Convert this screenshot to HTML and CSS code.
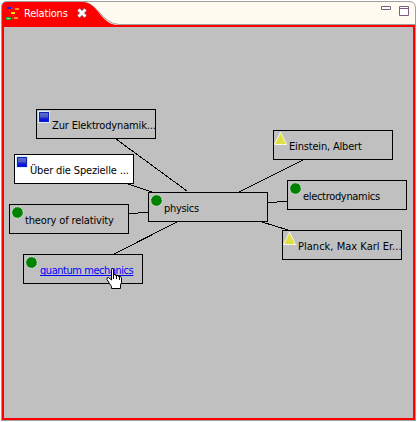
FILE: index.html
```html
<!DOCTYPE html>
<html lang="en">
<head>
<meta charset="utf-8">
<title>Relations</title>
<link rel="stylesheet" href="styles.css">
</head>
<body>
<section class="view">
  <header class="tabbar">
    <svg class="tab-shape" width="417" height="27" viewBox="0 0 417 27">
      <path d="M1.500 27V7Q1.500 1.500 7 1.500H409Q415.500 1.500 415.500 8V27Z" fill="#fffbf0" stroke="#a0a0a0"/>
      <path d="M2 27V7Q2 2 7 2H82C98 2 102 24 119 24.500H415" fill="none" stroke="#a0a0a0"/>
      <path d="M2 27V7Q2 2 7 2H82C98 2 101 25 118 25H415V27Z" fill="#f00"/>
    </svg>
    <svg class="tab-icon" width="14" height="14" viewBox="0 0 14 14" shape-rendering="crispEdges">
      <path fill="#c06050" d="M6 2h1v1H6zM3 4h1v1H3zM7 9h1v1H7zM6 12h1v1H6z"/>
      <path fill="#2020e0" d="M1 1h4v2H1z"/><path fill="#ff8c20" d="M9 2h4v2H9zM8 11h4v2H8z"/>
      <path fill="#ffe820" d="M5 6h4v2H5z"/><path fill="#20a030" d="M0 11h5v3H0z"/><path fill="#b0e080" d="M1 12h3v1H1z"/>
    </svg>
    <h1 class="tab-title">Relations</h1>
    <svg class="tab-close" width="10" height="10" viewBox="0 0 10 10">
      <path d="M1.500 1.500L8.500 8.500M8.500 1.500L1.500 8.500" stroke="#916080" stroke-width="4"/>
      <path d="M1.500 1.500L8.500 8.500M8.500 1.500L1.500 8.500" stroke="#fff" stroke-width="2.500"/>
    </svg>
    <svg class="window-tools" width="28" height="10" viewBox="0 0 28 10">
      <path d="M.5.5h9v3h-9zM18.500.5h9v9h-9zM18.500 2.500h9" fill="#fff" stroke="#7c5c80"/>
    </svg>
  </header>
  <main class="canvas"></main>

  <svg class="edges" width="417" height="422" viewBox="0 0 417 422">
    <path d="M116 139L187 191M128 184L152 192M129 214L148 212M114 254L177 222M239 192L303 160M268 203L287 201M262 222L288 230"/>
  </svg>

  <svg class="symbols" width="0" height="0">
    <linearGradient id="blue" x2="0" y2="1"><stop stop-color="#6472c8"/><stop offset=".5" stop-color="#4a5ac0"/><stop offset=".6" stop-color="#1828d0"/><stop offset="1" stop-color="#0000f0"/></linearGradient>
    <symbol id="square" viewBox="0 0 16 16"><path fill="#d8ecff" d="M2 2h12v12H2z"/><path fill="url(#blue)" d="M3 3h10v10H3z"/><path fill="none" stroke="#1020c0" d="M3.500 3.500h9v9h-9z"/></symbol>
    <symbol id="circle" viewBox="0 0 16 16"><circle cx="8.500" cy="8.500" r="5.700" fill="#008200" stroke="#dce8dc" stroke-dasharray="2 .7"/></symbol>
    <symbol id="triangle" viewBox="0 0 16 16"><path d="M7.500 2L13.500 14.500H1.500Z" fill="#e0e040" stroke="#fff" stroke-dasharray="2 .4"/></symbol>
  </svg>

  <div class="node zur"><svg class="icon"><use href="#square"/></svg><span class="label">Zur Elektrodynamik...</span></div>
  <div class="node spezielle"><svg class="icon"><use href="#square"/></svg><span class="label">Über die Spezielle ...</span></div>
  <div class="node theory"><svg class="icon"><use href="#circle"/></svg><span class="label">theory of relativity</span></div>
  <div class="node quantum"><svg class="icon"><use href="#circle"/></svg><a class="label">quantum mechanics</a></div>
  <div class="node physics"><svg class="icon"><use href="#circle"/></svg><span class="label">physics</span></div>
  <div class="node einstein"><svg class="icon"><use href="#triangle"/></svg><span class="label">Einstein, Albert</span></div>
  <div class="node electro"><svg class="icon"><use href="#circle"/></svg><span class="label">electrodynamics</span></div>
  <div class="node planck"><svg class="icon"><use href="#triangle"/></svg><span class="label">Planck, Max Karl Er...</span></div>

  <svg class="pointer" width="17" height="22" viewBox="0 0 17 22">
    <path d="M5.500 1.500Q6.500 0 7.500 1.500V6.500H9.500V7.500H12.500V8.500H14.500L15.500 10V14.500L14.500 17V20.500H5.500V18.500L3.500 15.500L1 11.500Q.5 9.500 2.500 9.500L5.500 12Z" fill="#fff" stroke="#000"/>
    <path d="M7.500 6v5M10.500 7v4M13.500 8v4" stroke="#000"/>
  </svg>
</section>
</body>
</html>
```
FILE: styles.css
```css
body {
  margin: 0;
  background: #fff;
  overflow: hidden;
  font: 11px/14px "DejaVu Sans Condensed", "DejaVu Sans", sans-serif;
  color: #000;
}
.view {
  position: relative;
  display: flex;
  flex-direction: column;
  width: 417px;
  height: 422px;
}
.tabbar {
  position: relative;
  display: flex;
  align-items: flex-start;
  height: 27px;
  flex: none;
  padding: 6px 8px 0 6px;
  box-sizing: border-box;
}
.tab-shape { position: absolute; left: 0; top: 0; }
.tab-icon, .tab-title, .tab-close, .window-tools { position: relative; flex: none; }
.tab-title {
  margin: 1px 0 0 4px;
  width: 44px;
  font: inherit;
  color: #fff;
  white-space: nowrap;
  letter-spacing: -.2px;
}
.tab-close { margin: 2px 0 0 9px; }
.window-tools { margin-left: auto; }
.canvas {
  height: 391px;
  margin: 0 2px;
  background: #c0c0c0;
  border: solid #f00;
  border-width: 0 2px 2px;
  box-shadow: 0 0 0 1px #a0a0a0;
  clip-path: inset(0 -1px -1px);
}
.edges { position: absolute; left: 0; top: 0; }
.edges path { stroke: #000; fill: none; shape-rendering: crispEdges; }
.symbols { position: absolute; }
.node {
  position: absolute;
  display: flex;
  width: 120px;
  height: 30px;
  box-sizing: border-box;
  border: 1px solid #000;
  background: #c0c0c0;
  letter-spacing: -.15px;
}
.icon { width: 16px; height: 16px; margin: -1px 0 0 -1px; flex: none; }
.label { margin-top: 9px; height: 14px; white-space: pre; }
.zur { left: 36px; top: 109px; }
.spezielle { left: 14px; top: 154px; background: #fff; }
.theory { left: 9px; top: 204px; }
.quantum { left: 23px; top: 254px; letter-spacing: -.45px; }
.quantum .label { margin-left: 1px; color: #00f; text-decoration: underline 1px; text-underline-offset: 1px; text-decoration-skip-ink: none; }
.physics { left: 148px; top: 192px; letter-spacing: -.3px; }
.einstein { left: 273px; top: 130px; letter-spacing: -.18px; }
.electro { left: 287px; top: 180px; letter-spacing: -.32px; }
.planck { left: 282px; top: 230px; letter-spacing: .02px; }
.pointer { position: absolute; left: 106px; top: 268px; }
```
